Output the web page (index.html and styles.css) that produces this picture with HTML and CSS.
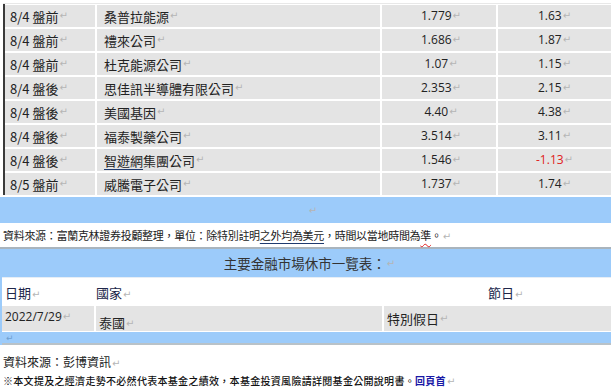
FILE: index.html
```html
<!DOCTYPE html>
<html lang="zh-Hant">
<head>
<meta charset="utf-8">
<link rel="stylesheet" href="styles.css">
</head>
<body>
<div class="page">
  <div class="top-gap"></div>
  <div class="earn">
    <div class="erow"><div class="c1">8/4 盤前<span class="pm">↵</span></div><div class="c2">桑普拉能源<span class="pm">↵</span></div><div class="c3">1.779<span class="pm">↵</span></div><div class="c4">1.63<span class="pm">↵</span></div></div>
    <div class="erow"><div class="c1">8/4 盤前<span class="pm">↵</span></div><div class="c2">禮來公司<span class="pm">↵</span></div><div class="c3">1.686<span class="pm">↵</span></div><div class="c4">1.87<span class="pm">↵</span></div></div>
    <div class="erow"><div class="c1">8/4 盤前<span class="pm">↵</span></div><div class="c2">杜克能源公司<span class="pm">↵</span></div><div class="c3">1.07<span class="pm">↵</span></div><div class="c4">1.15<span class="pm">↵</span></div></div>
    <div class="erow"><div class="c1">8/4 盤後<span class="pm">↵</span></div><div class="c2">思佳訊半導體有限公司<span class="pm">↵</span></div><div class="c3">2.353<span class="pm">↵</span></div><div class="c4">2.15<span class="pm">↵</span></div></div>
    <div class="erow"><div class="c1">8/4 盤後<span class="pm">↵</span></div><div class="c2">美國基因<span class="pm">↵</span></div><div class="c3">4.40<span class="pm">↵</span></div><div class="c4">4.38<span class="pm">↵</span></div></div>
    <div class="erow"><div class="c1">8/4 盤後<span class="pm">↵</span></div><div class="c2">福泰製藥公司<span class="pm">↵</span></div><div class="c3">3.514<span class="pm">↵</span></div><div class="c4">3.11<span class="pm">↵</span></div></div>
    <div class="erow"><div class="c1">8/4 盤後<span class="pm">↵</span></div><div class="c2"><span class="uline">智遊網</span>集團公司<span class="pm">↵</span></div><div class="c3">1.546<span class="pm">↵</span></div><div class="c4"><span class="neg">-1.13</span><span class="pm">↵</span></div></div>
    <div class="erow"><div class="c1">8/5 盤前<span class="pm">↵</span></div><div class="c2">威騰電子公司<span class="pm">↵</span></div><div class="c3">1.737<span class="pm">↵</span></div><div class="c4">1.74<span class="pm">↵</span></div></div>
  </div>
  <div class="band band-mid"><span class="pm">↵</span></div>
  <p class="source">資料來源：富蘭克林證券投顧整理，單位：除特別註明<span class="uline">之外均為美元</span>，時間以當地時間為<span class="wavy">準</span>。<span class="pm">↵</span></p>
  <div class="holiday">
    <div class="htitle">主要金融市場休市一覽表：<span class="pm">↵</span></div>
    <div class="hhead">
      <div class="h1">日期<span class="pm">↵</span></div>
      <div class="h2">國家<span class="pm">↵</span></div>
      <div class="h3">節日<span class="pm">↵</span></div>
    </div>
    <div class="hrow">
      <div class="d1">2022/7/29<span class="pm">↵</span></div>
      <div class="d2">泰國<span class="pm">↵</span></div>
      <div class="d3">特別假日<span class="pm">↵</span></div>
    </div>
    <div class="hfoot"><span class="pm">↵</span></div>
  </div>
  <p class="source2">資料來源：彭博資訊<span class="pm">↵</span></p>
  <p class="note">※本文提及之經濟走勢<span class="wavy">不</span>必然代表本基金之績效，本基金投資風險請詳閱基金公開說明書。<a class="link" href="#">回頁首</a><span class="pm">↵</span></p>
</div>
</body>
</html>
```
FILE: styles.css
```css
html, body {
  margin: 0;
  padding: 0;
  background: #ffffff;
}
.page {
  width: 611px;
  height: 387px;
  overflow: hidden;
  font-family: "Noto Sans CJK TC", "Noto Sans", sans-serif;
  color: #222;
  font-size: 13px;
}
.top-gap {
  height: 3px;
  margin-left: 3px;
  border-bottom: 1px solid #e8e8e8;
}
.earn {
  margin-left: 3px;
  border-left: 2px solid #3a3a3a;
  display: flex;
  flex-direction: column;
  gap: 2px;
  padding-top: 1px;
}
.erow {
  display: grid;
  grid-template-columns: 90px 283px 114px 1fr;
  column-gap: 2px;
  height: 22px;
}
.erow > div {
  background: #e4e4e4;
  display: flex;
  align-items: center;
  line-height: 1;
}
.c1 { padding-left: 5px; }
.c2 { padding-left: 7px; }
.c3, .c4 {
  justify-content: center;
  font-family: "Open Sans", "Noto Sans", sans-serif;
  font-size: 12px;
}
.c3 { padding-left: 4px; }
.c4 { padding-left: 0; }
.pm {
  color: #b5b5b5;
  font-size: 10px;
  margin-left: 1px;
  font-family: "DejaVu Sans", sans-serif;
}
.neg { color: #e02020; }
.uline {
  text-decoration: underline;
  text-decoration-color: #1f3a6e;
  text-underline-offset: 3px;
}
.wavy {
  text-decoration: underline wavy #e02020;
  text-underline-offset: 3px;
  text-decoration-thickness: 1px;
}
.band {
  background: #9ccbfa;
}
.band-mid {
  height: 26px;
  margin-top: 2px;
  display: flex;
  align-items: center;
  justify-content: center;
  padding-left: 14px;
}
.source {
  margin: 0;
  height: 24px;
  line-height: 24px;
  padding-left: 3px;
  font-size: 11px;
  letter-spacing: -0.3px;
  color: #222;
  border-bottom: 2px solid #a9b4bd;
}
.holiday {
  border-left: 2px solid #9ccbfa;
}
.htitle {
  background: #9ccbfa;
  height: 28px;
  display: flex;
  align-items: center;
  justify-content: center;
  font-size: 13.5px;
  color: #333;
  padding-left: 6px;
}
.hhead {
  display: grid;
  grid-template-columns: 92px 391px 1fr;
  height: 28px;
  align-items: center;
  border-top: 1px solid #e6eef6;
  color: #20264a;
  font-size: 13px;
}
.h1 { padding-left: 3px; }
.h2 { padding-left: 2px; }
.h3 { padding-left: 3px; }
.hrow {
  display: grid;
  grid-template-columns: 92px 286px 1fr;
  column-gap: 2px;
  height: 25px;
}
.hrow > div {
  background: #e4e4e4;
  display: flex;
  line-height: 1;
}
.d1 {
  padding-left: 3px;
  align-items: center;
  padding-bottom: 3px;
  font-family: "Open Sans", "Noto Sans", sans-serif;
  font-size: 12px;
}
.d2 {
  padding-left: 3px;
  align-items: flex-end;
  padding-bottom: 2px;
}
.d3 {
  padding-left: 3px;
  align-items: center;
}
.hfoot {
  background: #9ccbfa;
  height: 11px;
  border-top: 1px solid #fff;
  border-bottom: 2px solid #b9c2c8;
  display: flex;
  align-items: center;
  padding-left: 3px;
}
.hfoot .pm { color: #6e9fd0; font-size: 9px; }
.source2 {
  margin: 0;
  padding-top: 9px;
  padding-left: 3px;
  font-size: 12px;
  line-height: 16px;
  color: #222;
}
.note {
  margin: 2px 0 0 0;
  padding-left: 3px;
  font-size: 10px;
  letter-spacing: 0.3px;
  line-height: 14px;
  color: #111;
  font-weight: 500;
}
.link {
  color: #1a1aa6;
  text-decoration: none;
  font-weight: 700;
}
```
